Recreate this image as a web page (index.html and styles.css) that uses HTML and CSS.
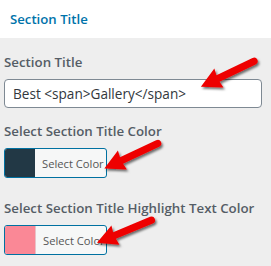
FILE: index.html
```html
<!DOCTYPE html>
<html>
<head>
<meta charset="utf-8">
<link rel="stylesheet" href="styles.css">
</head>
<body>
<div class="header"><span class="header-title">Section Title</span></div>
<div class="panel">
  <div class="field field-first">
    <label class="label">Section Title</label>
    <div class="input">Best &lt;span&gt;Gallery&lt;/span&gt;</div>
  </div>
  <div class="field field-second">
    <label class="label">Select Section Title Color</label>
    <button class="color-btn"><span class="swatch swatch-dark"></span><span class="btn-text">Select Color</span></button>
  </div>
  <div class="field field-third">
    <label class="label">Select Section Title Highlight Text Color</label>
    <button class="color-btn"><span class="swatch swatch-pink"></span><span class="btn-text">Select Color</span></button>
  </div>
</div>
<svg class="arrows" width="271" height="266" viewBox="0 0 271 266">
  <defs>
    <filter id="sh" x="-30%" y="-30%" width="160%" height="160%">
      <feDropShadow dx="1.5" dy="2" stdDeviation="1.2" flood-color="#000" flood-opacity="0.55"/>
    </filter>
    <path id="arr" d="M0,-3.6 L-40,-3.6 A3.6,3.6 0 0 0 -40,3.6 L0,3.6 L-1,10.5 L19,0 L-1,-10.5 Z"/>
  </defs>
  <g fill="#ee0000" filter="url(#sh)">
    <use href="#arr" transform="translate(218,78.5) rotate(154.3)"/>
    <use href="#arr" transform="translate(121.5,160.5) rotate(154.7)"/>
    <use href="#arr" transform="translate(114.5,235.5) rotate(157.5)"/>
  </g>
</svg>
</body>
</html>
```
FILE: styles.css
```css
html, body {
  margin: 0;
  padding: 0;
}
body {
  width: 271px;
  height: 266px;
  background: #eeeeee;
  font-family: "Open Sans", "Noto Sans", sans-serif;
  position: relative;
  overflow: hidden;
}
.header {
  height: 38px;
  background: #ffffff;
  display: flex;
  align-items: center;
  padding-left: 10px;
  box-sizing: border-box;
}
.header-title {
  color: #0073aa;
  font-size: 13.2px;
  font-weight: 600;
  line-height: 19px;
}
.panel {
  padding: 0 10px 0 4px;
  display: flex;
  flex-direction: column;
}
.field {
  display: flex;
  flex-direction: column;
  align-items: flex-start;
}
.field-first { margin-top: 15px; }
.field-second { margin-top: 14px; }
.field-third { margin-top: 21px; }
.label {
  color: #555d66;
  font-size: 13.3px;
  font-weight: 600;
  line-height: 19px;
  margin-bottom: 7px;
  white-space: nowrap;
}
.input {
  box-sizing: border-box;
  width: 258px;
  height: 29px;
  border: 1px solid #7e8993;
  border-radius: 4px;
  background: #ffffff;
  color: #32373c;
  font-size: 13.6px;
  line-height: 27px;
  padding-left: 8px;
  white-space: nowrap;
}
.color-btn {
  box-sizing: border-box;
  width: 103px;
  height: 30px;
  border: 1px solid #0071a1;
  border-radius: 3px;
  background: #f6f7f7;
  padding: 0;
  display: flex;
  align-items: stretch;
  font-family: inherit;
  overflow: hidden;
}
.swatch {
  width: 30px;
  flex: none;
}
.swatch-dark { background: #223845; }
.swatch-pink { background: #fa8896; border-right: 1px solid #e8c3c8; }
.btn-text {
  display: flex;
  align-items: center;
  padding-left: 7px;
  color: #555555;
  font-size: 11.2px;
  white-space: nowrap;
}
.arrows {
  position: absolute;
  left: 0;
  top: 0;
}
```
